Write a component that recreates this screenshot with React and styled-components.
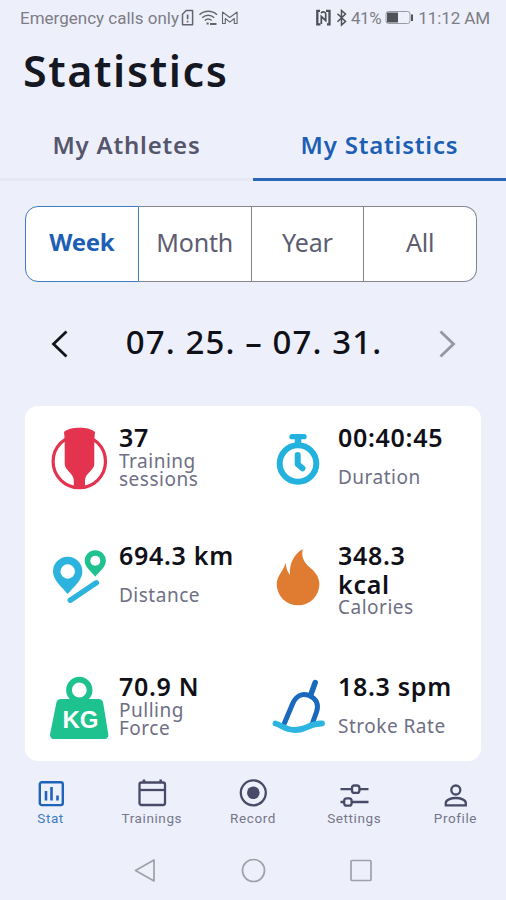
import React, { useState } from "react";
import styled, { createGlobalStyle } from "styled-components";

const tabs = ["My Athletes", "My Statistics"];
const periods = ["Week", "Month", "Year", "All"];

const stats = [
  { value: "37", label: "Training sessions", icon: <PaddleIcon /> },
  { value: "00:40:45", label: "Duration", icon: <TimerIcon /> },
  { value: "694.3 km", label: "Distance", icon: <DistanceIcon /> },
  { value: "348.3 kcal", label: "Calories", icon: <FlameIcon /> },
  { value: "70.9 N", label: "Pulling Force", icon: <WeightIcon /> },
  { value: "18.3 spm", label: "Stroke Rate", icon: <StrokeIcon /> },
];

const navItems = [
  { label: "Stat", icon: <StatIcon /> },
  { label: "Trainings", icon: <CalendarIcon /> },
  { label: "Record", icon: <RecordIcon /> },
  { label: "Settings", icon: <SlidersIcon /> },
  { label: "Profile", icon: <ProfileIcon /> },
];

function App() {
  const [tab, setTab] = useState("My Statistics");
  const [period, setPeriod] = useState("Week");
  const [page, setPage] = useState("Stat");

  return (
    <Screen>
      <GlobalStyle />
      <StatusBar>
        <StatusGroup>
          <StatusText $spacing={0}>Emergency calls only</StatusText>
          <StatusIcons />
        </StatusGroup>
        <StatusGroup>
          <NfcBluetoothIcon />
          <StatusText $spacing={-0.4}>41%</StatusText>
          <BatteryIcon />
          <StatusText $spacing={-0.1}>11:12 AM</StatusText>
        </StatusGroup>
      </StatusBar>

      <Title>Statistics</Title>

      <Tabs>
        {tabs.map((item) => (
          <Tab key={item} $active={item === tab} onClick={() => setTab(item)}>
            {item}
          </Tab>
        ))}
      </Tabs>

      <Periods>
        {periods.map((item) => (
          <Period
            key={item}
            $active={item === period}
            onClick={() => setPeriod(item)}
          >
            {item}
          </Period>
        ))}
      </Periods>

      <DateRow>
        <ArrowButton aria-label="Previous">
          <svg width="20" height="30" viewBox="0 0 20 30" fill="none">
            <path d="M17.500 2.500 4.500 15l13 12.500" stroke="#14141c" strokeWidth="2.800" />
          </svg>
        </ArrowButton>
        <DateText>07. 25. – 07. 31.</DateText>
        <ArrowButton aria-label="Next">
          <svg width="20" height="30" viewBox="0 0 20 30" fill="none">
            <path d="m3.500 2.500 13 12.500-13 12.500" stroke="#96969f" strokeWidth="2.800" />
          </svg>
        </ArrowButton>
      </DateRow>

      <Card>
        {stats.map((stat) => (
          <Stat key={stat.label}>
            {stat.icon}
            <StatText>
              <StatValue>{stat.value}</StatValue>
              <StatLabel>{stat.label}</StatLabel>
            </StatText>
          </Stat>
        ))}
      </Card>

      <BottomNav>
        {navItems.map((item) => (
          <NavItem
            key={item.label}
            $active={item.label === page}
            onClick={() => setPage(item.label)}
          >
            {item.icon}
            <NavLabel $active={item.label === page}>{item.label}</NavLabel>
          </NavItem>
        ))}
      </BottomNav>

      <SystemNav>
        <svg width="24" height="26" viewBox="0 0 24 26">
          <path d="M2.500 12.500 21 2v21z" />
        </svg>
        <svg width="26" height="26" viewBox="0 0 26 26">
          <circle cx="13.500" cy="12.500" r="11" />
        </svg>
        <svg width="24" height="26" viewBox="0 0 24 26">
          <rect x="2" y="2.500" width="20" height="20" rx="1" />
        </svg>
      </SystemNav>
    </Screen>
  );
}

export default App;

/* status bar */

function StatusIcons() {
  return (
    <StatusSvg width="60" height="18" viewBox="0 0 60 18">
      <path d="M6.200 1.500h6.400v14.300H2.500V5.200z" strokeWidth="1.500" strokeLinejoin="round" />
      <path d="M7.600 5.500v4.800M7.600 11.800v1.800" strokeWidth="1.700" />
      <path
        d="M19.500 5.800c5-4.600 12.500-4.600 17.500 0M22.200 8.700c3.500-3.200 8.500-3.200 12 0M24.800 11.500c2-1.800 4.800-1.800 6.800 0"
        strokeWidth="1.500"
      />
      <path d="M26.500 14.500h2.200M30 15h6.500" strokeWidth="2" />
      <path
        d="M42.500 14.500v-11.500l7.300 5.500 7.300-5.500v11.500h-2.800V9.500l-4.500 3.700-4.500-3.700v5z"
        strokeWidth="1.100"
        strokeLinejoin="round"
      />
    </StatusSvg>
  );
}

function NfcBluetoothIcon() {
  return (
    <svg width="36" height="18" viewBox="0 0 36 18" fill="none" stroke="#4f4f57">
      <path d="M5 1.800H2.300v13.500h3.200M11 1.800h3.500v13.500H12" strokeWidth="2.300" />
      <path d="M6.300 15V7.500l4.400 4V5C10.700 2.800 8 2.300 6 4" strokeWidth="1.700" />
      <path d="m22.500 4.800 8 7.700-4 3.500V1.500l4 3.500-8 7.700" strokeWidth="1.500" />
    </svg>
  );
}

function BatteryIcon() {
  return (
    <Battery width="29" height="16" viewBox="0 0 29 16">
      <rect x="1" y="1.500" width="24" height="12" rx="2.500" fill="none" stroke="#9a9aa2" />
      <rect x="2" y="2.500" width="11" height="10" fill="#515158" />
      <rect x="26" y="4.500" width="2" height="6.500" fill="#515158" />
    </Battery>
  );
}

/* statistics */

function PaddleIcon() {
  return (
    <StatSvg viewBox="0 0 64 72">
      <circle cx="32.300" cy="37.500" r="26.200" fill="none" stroke="#e4334f" strokeWidth="3.200" />
      <path
        d="M17 8C22 2.300 43 2.300 48 8l-.7 7v25c0 6-9.300 9.500-9.300 16.500v8H26.800v-8c0-7-9.100-10.500-9.100-16.500V15z"
        fill="#e4334f"
      />
    </StatSvg>
  );
}

function TimerIcon() {
  return (
    <StatSvg viewBox="0 0 64 72" fill="none" stroke="#23b2de">
      <circle cx="32" cy="39.500" r="18.300" strokeWidth="6" />
      <path d="M26 12.700h12" strokeWidth="5.300" strokeLinecap="round" />
      <path d="M32 13v7" strokeWidth="6.500" />
      <path
        d="M31.700 31v9.300l4.800 4"
        strokeWidth="6"
        strokeLinecap="round"
        strokeLinejoin="round"
      />
    </StatSvg>
  );
}

function DistanceIcon() {
  return (
    <StatSvg viewBox="0 0 64 72">
      <path
        d="M20.700 52C15 45 6 38.500 6 29.500a14.700 14.700 0 0 1 29.400 0c0 9-9 15.500-14.700 22.500z"
        fill="#2cb4de"
      />
      <circle cx="20.700" cy="29.500" r="7.200" fill="#fff" />
      <path
        d="M48.300 34.700c-4-5-10.600-9.500-10.600-15.900a10.600 10.600 0 0 1 21.200 0c0 6.400-6.600 10.900-10.600 15.900z"
        fill="#1fc28f"
      />
      <circle cx="48.300" cy="18.800" r="5" fill="#fff" />
      <path d="M23.300 58.200 49.300 40.800" stroke="#2cb4de" strokeWidth="5.500" strokeLinecap="round" />
    </StatSvg>
  );
}

function FlameIcon() {
  return (
    <StatSvg viewBox="0 0 64 72">
      <path
        d="M36.700 7c-1.500 7 .5 12 6 17.500 6.500 5 10.700 10.500 10.700 17.800a21.350 21 0 0 1-42.700 0c0-8.500 6.500-12.800 9-21.600.3 5.500 1.800 9 4.300 12.300C23 21 28.500 12 36.700 7z"
        fill="#e07c31"
      />
    </StatSvg>
  );
}

function WeightIcon() {
  return (
    <StatSvg viewBox="0 0 64 72">
      <circle cx="32.300" cy="17" r="10.300" fill="none" stroke="#1ec28e" strokeWidth="5.800" />
      <path
        d="M14 26h37.500c2.500 0 4 1.200 4.600 3.500l5.100 31c.6 3.500-.9 5.500-4.200 5.500H7.500c-3.300 0-5-2-4.300-5.500l6.200-31C10 27.200 11.500 26 14 26z"
        fill="#1ec28e"
      />
      <WeightText x="15.500" y="55" textLength="36">
        KG
      </WeightText>
    </StatSvg>
  );
}

function StrokeIcon() {
  return (
    <StatSvg viewBox="0 0 64 72" fill="none" strokeLinecap="round">
      <path
        d="M18.500 50 26.500 31C29.500 23.500 35.500 19.500 43 22.500c7.500 3 10 9 7.500 16.500L46.500 50"
        stroke="#1969bd"
        strokeWidth="5"
      />
      <path d="m44.700 22 4.500-12.500" stroke="#1969bd" strokeWidth="5.500" />
      <path
        d="M9.500 50.500c5.500 1 9 6.500 19.500 6.500 12 0 14-7 27-6.500"
        stroke="#2bb5e0"
        strokeWidth="5.800"
      />
    </StatSvg>
  );
}

/* bottom navigation */

function StatIcon() {
  return (
    <NavSvg viewBox="0 0 30 30">
      <rect x="3.800" y="4.300" width="23" height="22.800" rx="2" strokeWidth="2.400" />
      <path d="M10 13v9.500M15.500 9v13.500M21.500 17.500v5" strokeWidth="2.600" />
    </NavSvg>
  );
}

function CalendarIcon() {
  return (
    <NavSvg viewBox="0 0 30 30">
      <rect x="2.500" y="4.500" width="25.500" height="22.500" rx="2" strokeWidth="2.300" />
      <path d="M2.500 12h25.500" strokeWidth="2.300" />
      <path d="M7 1.500v3M23.700 1.500v3" strokeWidth="2.600" />
    </NavSvg>
  );
}

function RecordIcon() {
  return (
    <NavSvg viewBox="0 0 30 30">
      <circle cx="15.300" cy="14.800" r="12.500" strokeWidth="2.300" />
      <circle cx="15.300" cy="14.800" r="6.300" fill="currentColor" stroke="none" />
    </NavSvg>
  );
}

function SlidersIcon() {
  return (
    <NavSvg viewBox="0 0 30 30">
      <path d="M1.500 11.200h11M20.500 11.200h9M1.500 24h3.500M13 24h16.500" strokeWidth="2.300" />
      <rect x="13" y="7.500" width="7.400" height="7.400" rx="2.500" strokeWidth="2.300" />
      <rect x="5.200" y="20.300" width="7.400" height="7.400" rx="2.500" strokeWidth="2.300" />
    </NavSvg>
  );
}

function ProfileIcon() {
  return (
    <NavSvg viewBox="0 0 30 30">
      <circle cx="15.800" cy="12" r="4.500" strokeWidth="2.300" />
      <path d="M5.800 27.300V25c0-3 5-5 10-5s10 2 10 5v2.300z" strokeWidth="2.300" />
    </NavSvg>
  );
}

const GlobalStyle = createGlobalStyle`
  body {
    margin: 0;
    background: #edf0fb;
  }

  * {
    box-sizing: border-box;
  }

  button {
    padding: 0;
    border: none;
    background: none;
    font: inherit;
    color: inherit;
  }
`;

const Screen = styled.div`
  width: 506px;
  height: 900px;
  display: flex;
  flex-direction: column;
  overflow: hidden;
  background: #edf0fb;
  font-family: "Noto Sans", "Open Sans", sans-serif;
`;

const StatusBar = styled.div`
  height: 36px;
  padding: 0 16px 0 20px;
  display: flex;
  flex-shrink: 0;
  align-items: center;
  justify-content: space-between;
`;

const StatusGroup = styled.div`
  display: flex;
  align-items: center;
`;

const StatusText = styled.span`
  font-family: Roboto, sans-serif;
  font-size: 17px;
  line-height: 20px;
  letter-spacing: ${(props) => props.$spacing}px;
  white-space: nowrap;
  color: #7d7d86;
`;

const StatusSvg = styled.svg`
  margin-left: 1px;
  fill: none;
  stroke: #65656d;
`;

const Battery = styled.svg`
  margin: 0 4px;
`;

const Title = styled.h1`
  height: 76px;
  margin: 0;
  padding-left: 23px;
  font-weight: 600;
  font-size: 43px;
  line-height: 69px;
  letter-spacing: 1.6px;
  color: #151722;
`;

const Tabs = styled.div`
  height: 69px;
  display: flex;
  flex-shrink: 0;
`;

const Tab = styled.button`
  flex: 1;
  padding-bottom: 1px;
  border-bottom: 3px solid ${(props) => (props.$active ? "#2a66b8" : "#e6e9f3")};
  font-weight: 600;
  font-size: 24px;
  letter-spacing: 0.8px;
  color: ${(props) => (props.$active ? "#1c5fb5" : "#55566c")};
`;

const Periods = styled.div`
  width: 452px;
  height: 76px;
  margin: 25px 0 0 25px;
  display: flex;
  flex-shrink: 0;
`;

const Period = styled.button`
  flex: 1;
  padding-bottom: 5px;
  border: 1.5px solid ${(props) => (props.$active ? "#3f7cc0" : "#85858c")};
  border-left-width: ${(props) => (props.$active ? "1.5px" : "0")};
  background: #fff;
  font-weight: ${(props) => (props.$active ? 700 : 400)};
  font-size: ${(props) => (props.$active ? 24 : 25)}px;
  letter-spacing: ${(props) => (props.$active ? -0.3 : -0.2)}px;
  color: ${(props) => (props.$active ? "#1c5fb5" : "#5c5d70")};

  &:first-child {
    border-radius: 13px 0 0 13px;
  }

  &:last-child {
    border-radius: 0 13px 13px 0;
  }
`;

const DateRow = styled.div`
  height: 124px;
  padding: 0 48px;
  display: flex;
  flex-shrink: 0;
  align-items: center;
  justify-content: space-between;
`;

const ArrowButton = styled.button`
  width: 22px;
  height: 30px;
`;

const DateText = styled.span`
  padding: 0 0 4px 2px;
  font-weight: 500;
  font-size: 33px;
  line-height: 40px;
  letter-spacing: 1.1px;
  white-space: nowrap;
  color: #101018;
`;

const Card = styled.div`
  width: 456px;
  height: 355px;
  margin-left: 25px;
  padding: 18px 10px 0 22px;
  display: grid;
  flex-shrink: 0;
  grid-template-columns: 219px 1fr;
  grid-template-rows: 118px 131px 1fr;
  border-radius: 13px;
  background: #fff;
`;

const Stat = styled.div`
  display: flex;
  gap: 8px;
`;

const StatSvg = styled.svg`
  width: 64px;
  height: 72px;
  flex-shrink: 0;
`;

const StatText = styled.div`
  width: 118px;
  min-height: 63px;
  margin-top: -1px;
  display: flex;
  flex-direction: column;
  align-self: flex-start;
  justify-content: space-between;
`;

const StatValue = styled.span`
  font-weight: 600;
  font-size: 25px;
  line-height: 28.5px;
  letter-spacing: 0.7px;
  color: #101018;
`;

const StatLabel = styled.span`
  font-weight: 400;
  font-size: 19px;
  line-height: 18px;
  letter-spacing: 0.5px;
  color: #6e6f84;
`;

const WeightText = styled.text`
  font-family: "Liberation Sans", Arial, sans-serif;
  font-weight: 700;
  font-size: 24px;
  fill: #fff;
`;

const BottomNav = styled.div`
  height: 80px;
  padding-top: 17px;
  display: flex;
  flex-shrink: 0;
`;

const NavItem = styled.button`
  flex: 1;
  display: flex;
  flex-direction: column;
  align-items: center;
  color: ${(props) => (props.$active ? "#1f64b8" : "#484a68")};
`;

const NavSvg = styled.svg`
  width: 30px;
  height: 30px;
  fill: none;
  stroke: currentColor;
`;

const NavLabel = styled.span`
  margin-top: 2px;
  font-family: Roboto, sans-serif;
  font-weight: 400;
  font-size: 13.5px;
  line-height: 17px;
  letter-spacing: 0.6px;
  color: ${(props) => (props.$active ? "#3d7cc4" : "#74768a")};
`;

const SystemNav = styled.div`
  height: 59px;
  display: flex;
  align-items: center;
  justify-content: center;
  gap: 83px;

  svg {
    fill: none;
    stroke: #a0a0a8;
    stroke-width: 1.7;
    stroke-linejoin: round;
  }
`;
